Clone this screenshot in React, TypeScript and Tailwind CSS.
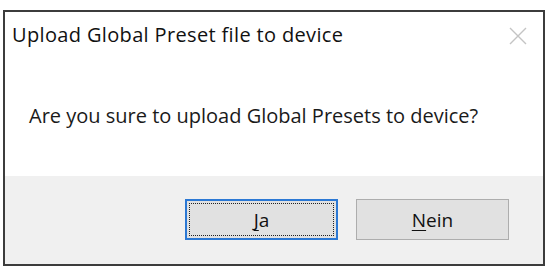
export default function App() {
  return (
    <div className="h-[273px] w-[550px] bg-white pl-[3px] pt-[10px]" style={{ fontFamily: '"Open Sans", "Noto Sans", sans-serif' }}>
      <div className="flex h-[256px] w-[542px] flex-col border-2 border-[#3c3c3c] bg-white">
        <div className="flex h-[164px] flex-col">
          <div className="flex items-start justify-between pl-[7px] pr-[16px] pt-[9px]">
            <span className="text-[20px] leading-[28px] tracking-[0.35px] text-[#111]">Upload Global Preset file to device</span>
            <svg className="mt-[6px]" width="18" height="18" viewBox="0 0 18 18">
              <path d="M1 1 L17 17 M17 1 L1 17" stroke="#c4c4c4" strokeWidth="1.4" fill="none" />
            </svg>
          </div>
          <div className="pl-[24px] pt-[53px] text-[20px] leading-[28px] text-[#1a1a1a]">
            Are you sure to upload Global Presets to device?
          </div>
        </div>
        <div className="flex flex-1 items-start justify-end gap-[18px] bg-[#f0f0f0] pr-[34px] pt-[23px]">
          <button
            type="button"
            className="flex h-[41px] w-[153px] items-center justify-center border-2 border-[#2b78d4] bg-[#e1e1e1] p-[2px]"
          >
            <span className="flex h-full w-full items-center justify-center border border-dotted border-[#222] pt-[2px] text-[19px] text-[#111]">
              <span className="underline underline-offset-[3px]">J</span>a
            </span>
          </button>
          <button
            type="button"
            className="flex h-[41px] w-[153px] items-center justify-center border border-[#adadad] bg-[#e1e1e1] pt-[2px] text-[19px] text-[#111]"
          >
            <span>
              <span className="underline underline-offset-[3px]">N</span>ein
            </span>
          </button>
        </div>
      </div>
    </div>
  );
}
